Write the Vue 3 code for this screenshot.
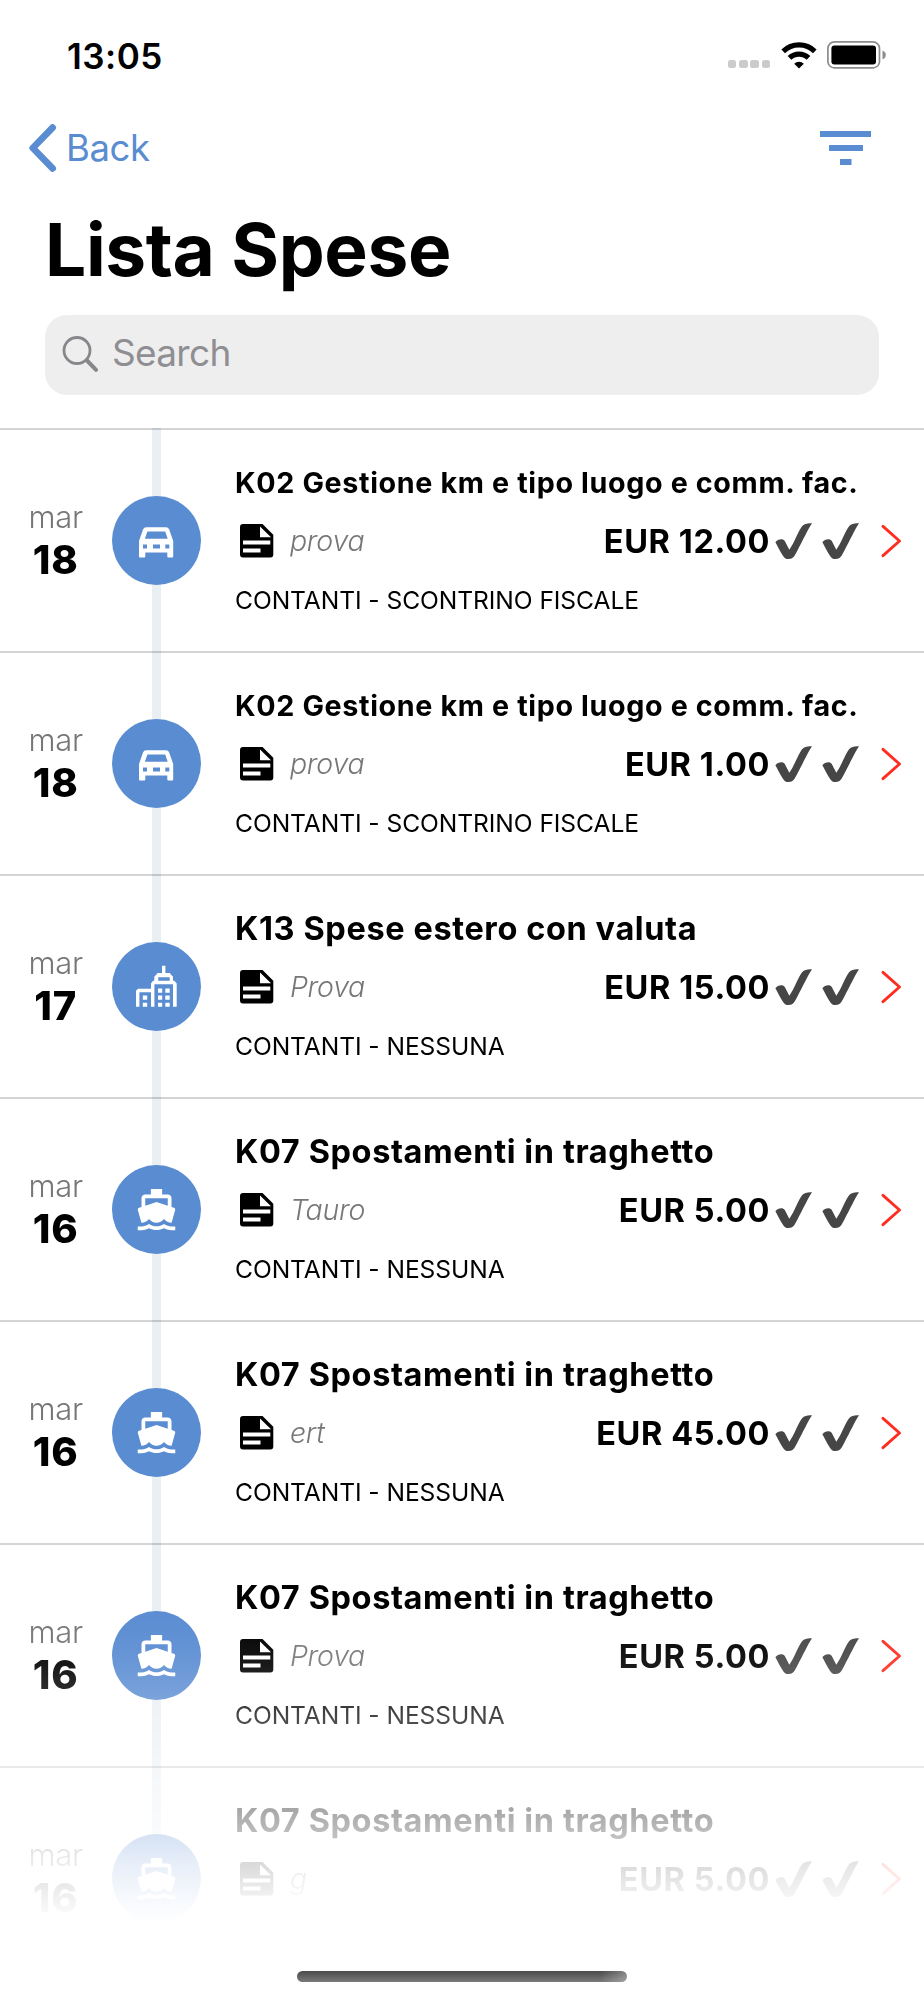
<script setup>
import { ref } from 'vue'

const search = ref('')

const expenses = [
  { id: 1, month: 'mar', day: '18', icon: 'car', title: 'K02 Gestione km e tipo luogo e comm. fac.', note: 'prova', amount: 'EUR 12.00', payment: 'CONTANTI - SCONTRINO FISCALE', compact: true },
  { id: 2, month: 'mar', day: '18', icon: 'car', title: 'K02 Gestione km e tipo luogo e comm. fac.', note: 'prova', amount: 'EUR 1.00', payment: 'CONTANTI - SCONTRINO FISCALE', compact: true },
  { id: 3, month: 'mar', day: '17', icon: 'city', title: 'K13 Spese estero con valuta', note: 'Prova', amount: 'EUR 15.00', payment: 'CONTANTI - NESSUNA' },
  { id: 4, month: 'mar', day: '16', icon: 'boat', title: 'K07 Spostamenti in traghetto', note: 'Tauro', amount: 'EUR 5.00', payment: 'CONTANTI - NESSUNA' },
  { id: 5, month: 'mar', day: '16', icon: 'boat', title: 'K07 Spostamenti in traghetto', note: 'ert', amount: 'EUR 45.00', payment: 'CONTANTI - NESSUNA' },
  { id: 6, month: 'mar', day: '16', icon: 'boat', title: 'K07 Spostamenti in traghetto', note: 'Prova', amount: 'EUR 5.00', payment: 'CONTANTI - NESSUNA' },
  { id: 7, month: 'mar', day: '16', icon: 'boat', title: 'K07 Spostamenti in traghetto', note: 'g', amount: 'EUR 5.00', payment: 'CONTANTI - NESSUNA' }
]
</script>

<template>
  <div class="screen">
    <div class="status-bar">
      <span class="time">13:05</span>
      <div class="status-icons">
        <div class="dots"><i v-for="n in 4" :key="n"></i></div>
        <svg class="wifi" width="36" height="27" viewBox="0 0 36 27">
          <g fill="none" stroke="#000" stroke-width="5.2">
            <path d="M2.2 9.3a22.6 22.6 0 0 1 31.6 0" />
            <path d="M8.5 15.9a13.6 13.6 0 0 1 19 0" />
          </g>
          <path d="M18 26.6l-4.8-4.8a6.9 6.9 0 0 1 9.6 0z" />
        </svg>
        <svg width="60" height="28" viewBox="0 0 60 28">
          <rect x="0.9" y="0.9" width="51.6" height="26" rx="6.5" fill="none" stroke="#8c8c8c" stroke-width="1.7" />
          <rect x="4.4" y="4.4" width="44.6" height="19" rx="3" />
          <path d="M55.5 9.6c2 .6 3.3 2.3 3.3 4.3s-1.3 3.7-3.3 4.3z" fill="#8c8c8c" />
        </svg>
      </div>
    </div>

    <nav class="nav">
      <a class="back">
        <svg width="28" height="48" viewBox="0 0 28 48">
          <path d="M23.6 3.6L3.8 24l19.8 20.4" fill="none" stroke="#5a8cd2" stroke-width="6.8" stroke-linecap="round" stroke-linejoin="round" />
        </svg>
        <span>Back</span>
      </a>
      <svg width="51" height="34" viewBox="0 0 51 34" fill="#5a8cd2">
        <path d="M0 0h51v6H0zM9 14h34v6H9zM20 28h11.5v6H20z" />
      </svg>
    </nav>

    <h1 class="heading">Lista Spese</h1>

    <div class="search">
      <svg width="36" height="36" viewBox="0 0 36 36" fill="none" stroke="#86868b" stroke-linecap="round">
        <circle cx="15" cy="14.5" r="13" stroke-width="2.8" />
        <path d="M25 24.500l9 9.3" stroke-width="4" />
      </svg>
      <input v-model="search" type="text" placeholder="Search" />
    </div>

    <div class="list">
      <div v-for="item in expenses" :key="item.id" class="row">
        <div class="date">
          <span class="month">{{ item.month }}</span>
          <span class="day">{{ item.day }}</span>
        </div>

        <div class="bullet">
          <svg v-if="item.icon === 'car'" width="45" height="45" viewBox="0 0 45 45">
            <path
              fill-rule="evenodd"
              d="M5 38.5V23L9 11.5Q9.8 9.2 12.3 9.2H32Q34.4 9.2 35.2 11.5L39.2 23V38.5Q39.2 39.5 38.2 39.5H34.3Q33.3 39.5 33.3 38.5V34.6H11.3V38.5Q11.3 39.5 10.3 39.5H6Q5 39.5 5 38.5zM13.4 13.5H31.2L33.7 20.7H10.9zM9 26.5h4v4H9zM19 26.5h7v4h-7zM31.3 26.5h4v4h-4z"
            />
          </svg>
          <svg v-else-if="item.icon === 'city'" width="45" height="45" viewBox="0 0 45 45">
            <path
              fill-rule="evenodd"
              d="M28 1.8h3.4v7.3h4.3l3.3 3.7v4h1.3l2.4 2.6v23.4h-3.7V20.2H20.4v22.6H17V28.2H5.4v14.6H2V26.8l2-2h13v-5.4l2-2.6h1.3v-4l3.4-3.7H28zM24.3 13.3v3.5h11.4v-3.5z"
            />
            <path d="M8.8 31.6h4.4v4.2H8.8zM8.8 38.7h4.4v4.1H8.8zM24 24.6h4.2v4.1H24zM31.3 24.6h4.4v4.1h-4.4zM24 31.6h4.2v4.2H24zM31.3 31.6h4.4v4.2h-4.4zM24 38.7h4.2v4.1H24zM31.3 38.7h4.4v4.1h-4.4z" />
          </svg>
          <svg v-else width="45" height="45" viewBox="0 0 24 24">
            <path
              d="M20 21c-1.39 0-2.78-.47-4-1.32-2.44 1.71-5.56 1.71-8 0C6.78 20.53 5.39 21 4 21H2v2h2c1.38 0 2.74-.35 4-.99 2.52 1.29 5.48 1.29 8 0 1.26.65 2.62.99 4 .99h2v-2h-2zM3.95 19H4c1.6 0 3.02-.88 4-2 .98 1.12 2.4 2 4 2s3.02-.88 4-2c.98 1.12 2.4 2 4 2h.05l1.89-6.68c.08-.26.06-.54-.06-.78s-.34-.42-.6-.5L20 10.62V6c0-1.1-.9-2-2-2h-3V1H9v3H6c-1.1 0-2 .9-2 2v4.62l-1.29.42c-.26.08-.48.26-.6.5s-.15.52-.06.78L3.95 19zM6 6h12v3.97L12 8 6 9.97V6z"
            />
          </svg>
        </div>

        <div class="content">
          <div class="title" :class="{ compact: item.compact }">{{ item.title }}</div>
          <div class="details">
            <svg class="doc" width="34" height="34" viewBox="0 0 34 34">
              <path
                fill-rule="evenodd"
                d="M3 0H22.5L33.3 10.7V30.5Q33.3 33.4 30.4 33.4H3Q0 33.4 0 30.5V3Q0 0 3 0zM20 2.4V13.3H31zM3 16.6V20.5H30.3V16.6zM3 24.6V28.5H20.5V24.6z"
              />
            </svg>
            <span class="note">{{ item.note }}</span>
            <span class="amount">{{ item.amount }}</span>
            <svg v-for="n in 2" :key="n" class="check" width="37" height="36" viewBox="0 0 37 36">
              <path
                fill="#464646"
                d="M.4 19.2C2.5 16.2 7.8 14.8 9.8 18L14.3 26.8C19.5 19.5 23.5 7.5 27.3 3 29.3.6 33 0 37 .3 33.5 5.5 27.5 18 22.8 26.8 19.5 33 18.5 36 13.5 36 9.5 36 8.8 34 6.5 30.5 4 26.5 2.5 22.8.4 19.2z"
              />
            </svg>
          </div>
          <div class="payment">{{ item.payment }}</div>
        </div>

        <svg class="arrow" width="21" height="34" viewBox="0 0 21 34">
          <path d="M2 2.3L18.5 17 2 31.7" fill="none" stroke="#ff2d20" stroke-width="2.9" stroke-linecap="round" stroke-linejoin="round" />
        </svg>
      </div>
    </div>

    <div class="home-indicator"></div>
  </div>
</template>

<style>
body {
  margin: 0;
  background: #fff;
}
</style>

<style scoped>
.screen {
  position: relative;
  display: flex;
  flex-direction: column;
  width: 924px;
  height: 2000px;
  overflow: hidden;
  background: #fff;
  color: #000;
  font-family: Inter, 'Liberation Sans', sans-serif;
}
svg {
  display: block;
  flex-shrink: 0;
}
.status-bar {
  display: flex;
  justify-content: space-between;
  align-items: center;
  height: 110px;
  padding: 0 37px 0 67px;
}
.time {
  padding-top: 1px;
  font-size: 35px;
  font-weight: 600;
  letter-spacing: 0.5px;
}
.status-icons {
  display: flex;
  align-items: center;
}
.dots {
  display: flex;
  gap: 2.8px;
  margin: 18px 11px 0 0;
}
.dots i {
  width: 8.4px;
  height: 8.4px;
  border-radius: 2.5px;
  background: #cbcbcb;
}
.wifi {
  margin-right: 10px;
}
.nav {
  display: flex;
  justify-content: space-between;
  align-items: center;
  height: 75px;
  padding: 0 53px 0 29px;
}
.back {
  display: flex;
  align-items: center;
  gap: 9px;
  font-size: 36.5px;
  letter-spacing: -0.4px;
  color: #5a8cd2;
}
.heading {
  margin: 0;
  padding-left: 45px;
  height: 130px;
  line-height: 130px;
  font-size: 73px;
  font-weight: 700;
  letter-spacing: -0.4px;
}
.search {
  display: flex;
  align-items: center;
  gap: 14px;
  width: 834px;
  height: 80px;
  margin: 0 45px 33px;
  padding-left: 17px;
  box-sizing: border-box;
  border-radius: 22px;
  background: #eee;
}
.search svg {
  margin-bottom: 2px;
}
.search input {
  flex: 1;
  padding: 0 0 5px;
  border: none;
  outline: none;
  background: none;
  font-family: inherit;
  font-size: 37px;
  letter-spacing: -0.7px;
}
.search input::placeholder {
  color: #8e8e93;
  opacity: 1;
}
.list {
  height: 1572px;
  overflow: hidden;
  /* timeline behind the bullets */
  background: linear-gradient(#eaeff3, #eaeff3) 152px 0 / 9px 100% no-repeat;
  mask-image: linear-gradient(
    #000 1170px,
    rgba(0, 0, 0, 0.97) 1205px,
    rgba(0, 0, 0, 0.9) 1237px,
    rgba(0, 0, 0, 0.8) 1272px,
    rgba(0, 0, 0, 0.5) 1339px,
    rgba(0, 0, 0, 0.35) 1380px,
    rgba(0, 0, 0, 0.26) 1405px,
    rgba(0, 0, 0, 0.14) 1437px,
    rgba(0, 0, 0, 0.06) 1467px,
    transparent 1495px
  );
}
.row {
  display: flex;
  align-items: center;
  height: 223px;
  box-sizing: border-box;
  border-top: 2px solid rgba(0, 0, 0, 0.17);
}
.date {
  display: flex;
  flex-direction: column;
  align-items: center;
  width: 111.5px;
  padding-bottom: 3px;
}
.month {
  line-height: 42px;
  font-size: 31px;
  font-weight: 300;
  letter-spacing: -0.3px;
  color: #777;
}
.day {
  line-height: 44px;
  font-size: 40px;
  font-weight: 800;
  letter-spacing: 1px;
}
.bullet {
  display: flex;
  align-items: center;
  justify-content: center;
  width: 89px;
  height: 89px;
  border-radius: 50%;
  background: #5a8cd2;
  fill: #fff;
}
.content {
  width: 624px;
  margin-left: 34.5px;
  padding-top: 2px;
}
.title {
  line-height: 59px;
  font-size: 32.5px;
  font-weight: 650;
  letter-spacing: 0.6px;
  white-space: nowrap;
}
.title.compact {
  font-size: 28.7px;
  letter-spacing: 0.64px;
}
.details {
  display: flex;
  align-items: center;
  height: 59px;
  padding-left: 5px;
}
.doc {
  margin-bottom: 2px;
}
.note {
  flex: 1;
  margin-left: 16px;
  padding-bottom: 2px;
  font-size: 28.5px;
  font-style: italic;
  font-weight: 350;
  letter-spacing: -0.3px;
  color: #777;
}
.amount {
  font-size: 32.5px;
  font-weight: 650;
  letter-spacing: 0.6px;
}
.check {
  margin: 0 0 2px 5px;
}
.check + .check {
  margin-left: 10px;
}
.payment {
  line-height: 59px;
  font-size: 24.6px;
  letter-spacing: -0.07px;
}
.arrow {
  margin-left: 21.5px;
}
.home-indicator {
  position: absolute;
  left: 297px;
  bottom: 18px;
  width: 330px;
  height: 11px;
  border-radius: 6px;
  background: linear-gradient(90deg, transparent 92%, rgba(255, 255, 255, 0.3)), linear-gradient(#4a4a4a, #7a7a7a);
}
</style>
